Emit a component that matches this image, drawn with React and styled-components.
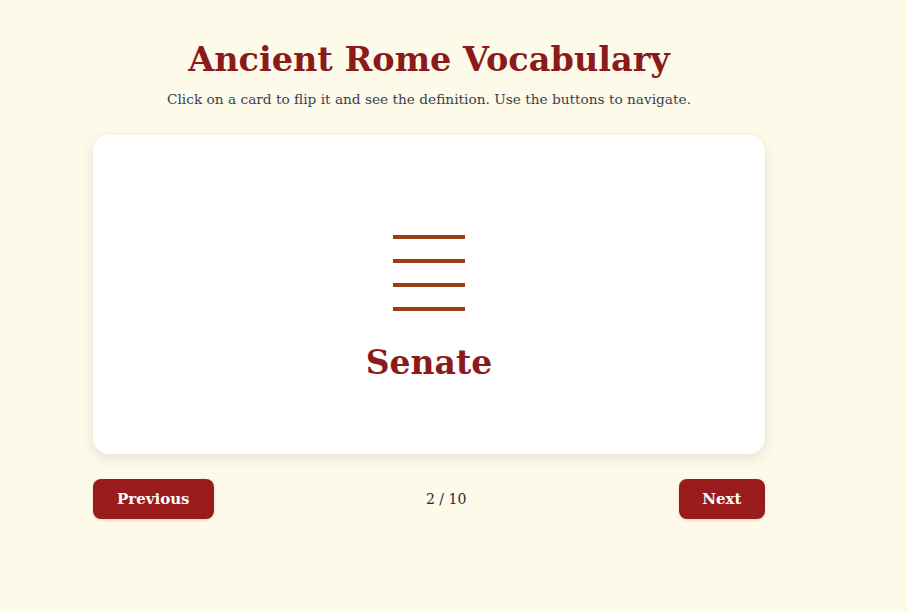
import React from "react";
import styled, { createGlobalStyle } from "styled-components";

const Global = createGlobalStyle`
  html, body { margin: 0; padding: 0; background: #fefae9; }
  body { font-family: "DejaVu Serif", "Liberation Serif", serif; }
`;

const Page = styled.div`
  min-height: 612px;
  box-sizing: border-box;
  padding: 37px 0 0 93px;
`;

const Column = styled.div`
  width: 672px;
  display: flex;
  flex-direction: column;
  align-items: center;
`;

const Title = styled.h1`
  margin: 0;
  font-size: 33.5px;
  line-height: 46px;
  font-weight: 700;
  color: #8b1a1a;
`;

const Subtitle = styled.p`
  margin: 5px 0 0;
  font-size: 13.7px;
  line-height: 22px;
  color: #374151;
`;

const Card = styled.div`
  margin-top: 25px;
  width: 100%;
  height: 319px;
  box-sizing: border-box;
  padding-top: 100px;
  background: #ffffff;
  border-radius: 16px;
  box-shadow: 0 4px 14px rgba(0, 0, 0, 0.1);
  display: flex;
  flex-direction: column;
  align-items: center;
  cursor: pointer;
`;

const Icon = styled.div`
  width: 72px;
  display: flex;
  flex-direction: column;
  gap: 20px;
`;

const Bar = styled.span`
  display: block;
  height: 4px;
  background: #9a3f10;
`;

const Term = styled.h2`
  margin: 32px 0 0;
  font-size: 33px;
  line-height: 40px;
  font-weight: 700;
  color: #8b1a1a;
`;

const Nav = styled.div`
  margin-top: 25px;
  width: 100%;
  display: flex;
  align-items: center;
  justify-content: space-between;
`;

const Button = styled.button`
  height: 40px;
  padding: 0 ${(p) => p.$px}px;
  border: none;
  border-radius: 8px;
  background: #991b1b;
  color: #ffffff;
  font-family: inherit;
  font-size: 15px;
  font-weight: 700;
  box-shadow: 0 1px 3px rgba(0, 0, 0, 0.15);
  cursor: pointer;
`;

const Counter = styled.span`
  font-size: 14px;
  color: #1f2937;
`;

export default function App() {
  return (
    <>
      <Global />
      <Page>
        <Column>
          <Title>Ancient Rome Vocabulary</Title>
          <Subtitle>Click on a card to flip it and see the definition. Use the buttons to navigate.</Subtitle>
          <Card>
            <Icon>
              <Bar />
              <Bar />
              <Bar />
              <Bar />
            </Icon>
            <Term>Senate</Term>
          </Card>
          <Nav>
            <Button $px={24}>Previous</Button>
            <Counter>2 / 10</Counter>
            <Button $px={23.5}>Next</Button>
          </Nav>
        </Column>
      </Page>
    </>
  );
}
